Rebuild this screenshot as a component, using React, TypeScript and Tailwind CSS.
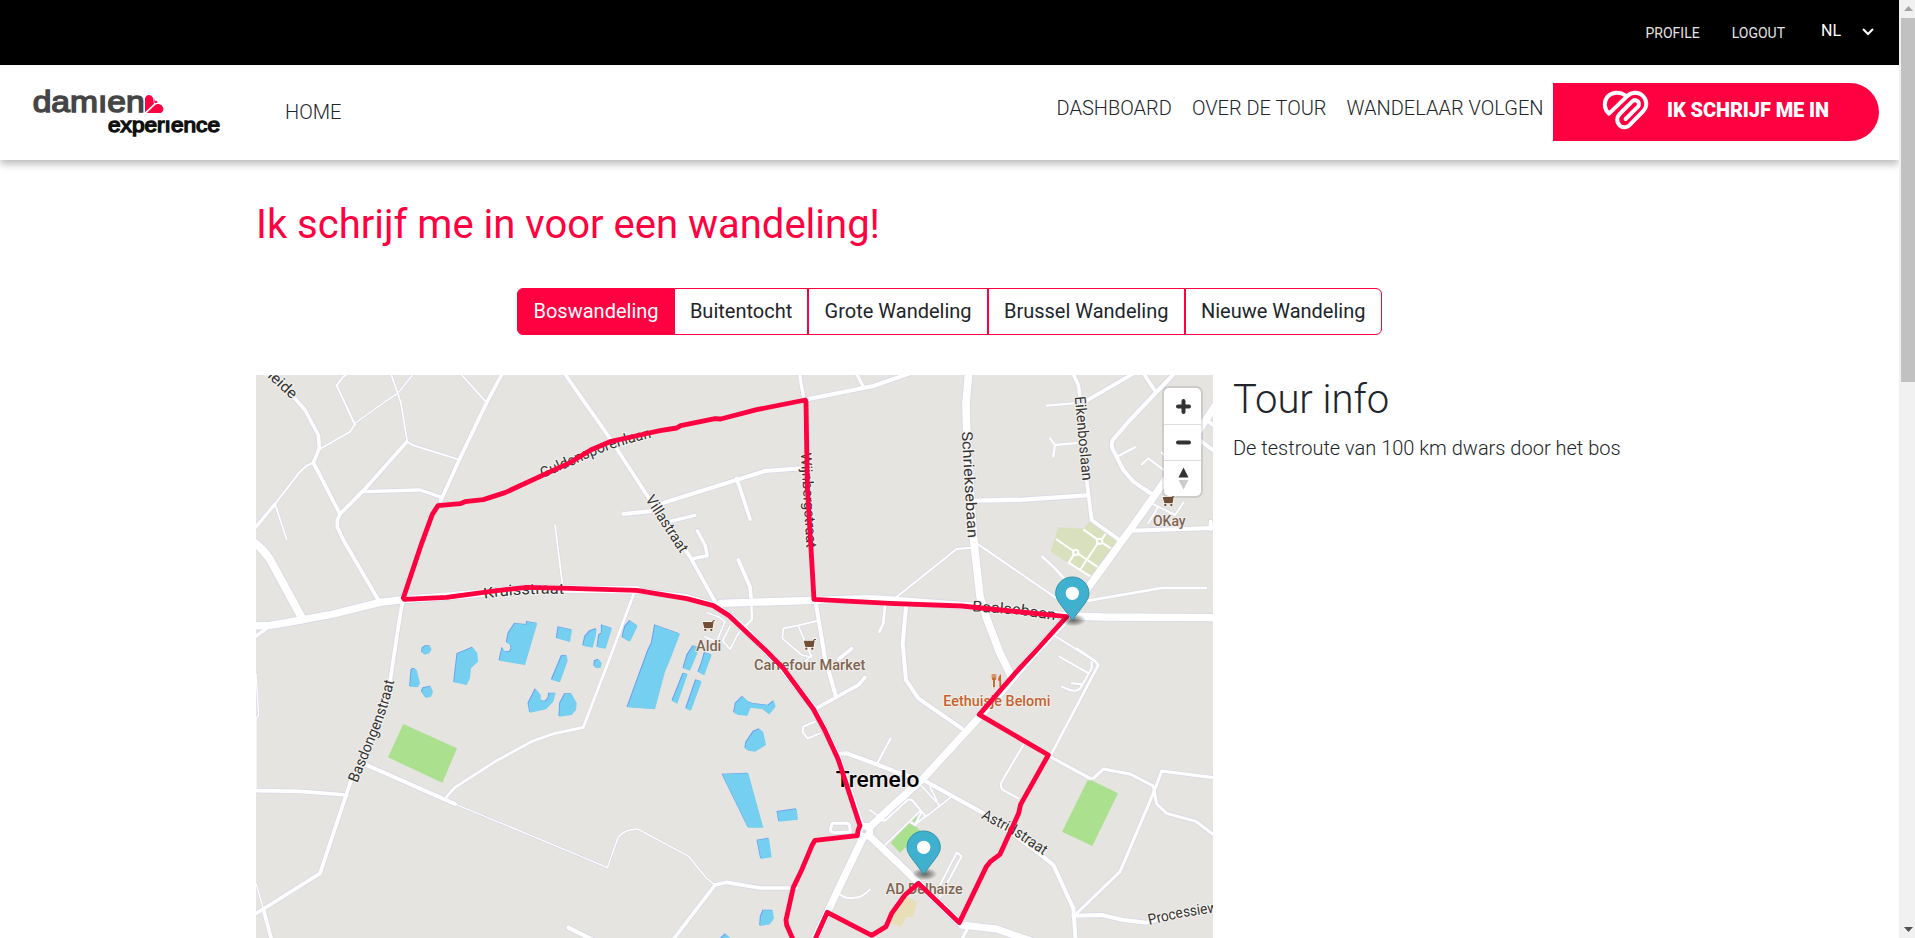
import React from "react";

const ROUTE = "#ff0040";

type Road = { w: number; d: string };

const roads: Road[] = [
  // footpaths and service roads
  { w: 4, d: "M315,160 L405,95 443,70 490,12" },
  { w: 5, d: "M423,12 L443,70 453,100 472,216" },
  { w: 6, d: "M292,12 L280,20 260,46 315,165" },
  { w: 5, d: "M315,163 L300,185 210,237" },
  { w: 6, d: "M75,402 L150,305 170,287 190,278" },
  { w: 5, d: "M75,402 L110,508" },
  { w: 6, d: "M472,216 L490,226 625,268" },
  { w: 5, d: "M635,15 L710,98" },
  { w: 5, d: "M915,465 L937,640" },
  { w: 4, d: "M615,1302 L990,1458 1072,1493 1105,1400 Q1130,1375 1165,1378 L1315,1458 1370,1525 1395,1545" },
  { w: 8, d: "M590,1280 L615,1252 735,1175 850,1112 915,1090 1000,1072 1085,850 1150,675" },
  { w: 4, d: "M18,1540 L40,1617" },
  { w: 4, d: "M18,910 L26,1035 16,1048" },
  { w: 4, d: "M18,1048 L18,1262" },
  { w: 7, d: "M1504,700 L1506,748 1480,775" },
  { w: 5, d: "M1372,728 L1405,740 1425,755 1400,815 1365,800 M1440,770 L1418,812 1440,838 1465,790 1500,755" },
  { w: 5, d: "M1705,752 L1645,766 1600,775 1597,805 1655,855 1685,862 1645,768 M1685,855 L1660,880" },
  { w: 6, d: "M1695,1055 L1660,1070 1658,1086 1673,1105 1710,1090" },
  { w: 6, d: "M1922,1105 L1882,1180" },
  { w: 6, d: "M1765,1570 Q1785,1588 1810,1583 Q1835,1585 1860,1558" },
  { w: 6, d: "M1890,1350 L1905,1352 1975,1288 1988,1292 2015,1325 1995,1365 1984,1358 M2028,1338 L1998,1362" },
  { w: 5, d: "M1905,1425 L2012,1322 M1905,1352 L1860,1320" },
  { w: 5, d: "M2012,1245 L2070,1308 M2040,1250 L2062,1295 M2105,1280 L2028,1340 1985,1290" },
  { w: 6, d: "M2065,1555 L2120,1448 2135,1458 2070,1580" },
  { w: 6, d: "M2320,1125 L2255,1235 Q2248,1252 2262,1262 L2305,1285" },
  { w: 6, d: "M2428,860 L2512,908 M2525,875 L2525,895 2495,948 Q2485,968 2460,960 L2435,950 M2465,940 L2495,943" },
  { w: 8, d: "M1905,705 L1900,760 1888,785" },
  { w: 6, d: "M1935,685 L2120,537 2165,533" },
  { w: 6, d: "M2180,520 L2420,685" },
  { w: 7, d: "M2390,107 L2470,100" },
  { w: 7, d: "M2400,205 L2415,225 2495,218 M2410,260 L2414,230" },
  { w: 7, d: "M2605,258 L2655,232" },
  { w: 7, d: "M2675,283 L2695,265 2745,303 M2735,248 L2790,300" },
  { w: 6, d: "M2705,400 L2775,435 2800,398 M2695,460 L2725,410" },
  { w: 8, d: "M2515,692 L2735,654 2868,654" },
  { w: 8, d: "M2377,560 L2410,590 2460,645" },
  { w: 6, d: "M2410,795 L2530,870" },
  { w: 8, d: "M2400,1160 L2545,885 2535,873 2480,836" },
  { w: 9, d: "M2475,1635 L2610,1505 2710,1270 2735,1203 2890,1223" },
  { w: 9, d: "M2400,1160 L2520,1225 2530,1225 2560,1197 2640,1212 2710,1248 2720,1302 2750,1330 2838,1354 2890,1394" },
  { w: 10, d: "M2150,1680 L2135,1710" },
  // residential streets
  { w: 11, d: "M40,0 L130,80 165,120 205,195 208,235 190,278 270,432 262,450 262,470 280,510 385,690" },
  { w: 11, d: "M470,216 L340,362 270,432" },
  { w: 10, d: "M340,365 L510,360 575,382" },
  { w: 11, d: "M757,10 L710,98 625,275 572,392" },
  { w: 10, d: "M12,478 L75,402" },
  { w: 10, d: "M12,803 L50,775" },
  { w: 11, d: "M458,690 L445,770 430,870 420,935 M300,1240 L210,1510 40,1617 12,1634" },
  { w: 11, d: "M420,935 L385,1060 300,1240" },
  { w: 11, d: "M22,1262 L150,1264 290,1275" },
  { w: 12, d: "M350,1185 L615,1302" },
  { w: 11, d: "M40,1617 L66,1715" },
  { w: 12, d: "M955,1673 L1050,1720" },
  { w: 11, d: "M1265,1715 L1395,1545 1430,1537 1530,1554 1640,1554" },
  { w: 11, d: "M943,8 L960,34 1080,205 1200,390 1320,560 1398,700" },
  { w: 12, d: "M1660,90 L1870,48 1945,22 2000,3" },
  { w: 10, d: "M1648,10 L1662,90 M1820,12 L1840,50" },
  { w: 12, d: "M1120,432 L1200,424 1235,400 1545,303 1655,295" },
  { w: 11, d: "M1460,325 L1500,447" },
  { w: 10, d: "M1245,458 L1335,436" },
  { w: 10, d: "M1342,482 L1365,525 1372,557 1325,567" },
  { w: 11, d: "M1465,570 L1500,650 1504,695" },
  { w: 12, d: "M1697,695 L1725,865 1758,980" },
  { w: 11, d: "M1845,922 L1825,945 1690,1020 M1805,836 L1765,868" },
  { w: 12, d: "M1765,1152 L1790,1150 1885,1185 1950,1210 2020,1230" },
  { w: 12, d: "M2020,1230 L2195,1327 2300,1400 2380,1460 2410,1485 2470,1615 2477,1715" },
  { w: 12, d: "M2470,1637 L2555,1635 2620,1650 2690,1658 2820,1625 2895,1605" },
  { w: 12, d: "M1968,712 L1958,820 1968,930 2005,985 2135,1075" },
  { w: 13, d: "M2170,392 L2320,389 2510,376" },
  { w: 11, d: "M2468,8 L2485,45 2490,80 2510,330 2525,450 2605,508" },
  { w: 11, d: "M2505,95 L2665,2" },
  { w: 12, d: "M2775,8 L2640,150 2590,208 Q2582,220 2587,235 L2620,300 2650,335 2705,372" },
  { w: 11, d: "M2680,10 L2715,62" },
  { w: 12, d: "M2640,482 L2890,474 M2882,478 L2882,455" },
  { w: 12, d: "M2850,212 L2892,242 M2865,148 L2892,166" },
  { w: 9, d: "M1745,1365 Q1745,1360 1752,1360 L1790,1360 Q1798,1360 1799,1370 L1801,1386 1755,1388 Q1741,1388 1741,1378 Z" },
  // main roads
  { w: 17, d: "M1398,710 Q1450,738 1500,792 L1600,900 1690,1012 1725,1080 1766,1165 1836,1370" },
  { w: 22, d: "M10,768 L60,766 110,758 250,732 390,697 460,689 600,678 840,656 1160,660" },
  { w: 15, d: "M1160,662 L1310,680 1400,708" },
  { w: 22, d: "M1412,700 L1690,691 1860,686 1920,690 2170,709 2440,737 2560,741 2895,743" },
  { w: 24, d: "M8,515 Q35,530 60,568 L158,748" },
  { w: 23, d: "M2156,10 L2148,100 2150,180 2170,500 2190,680 2210,745 2250,850 2285,920" },
  { w: 22, d: "M2895,108 L2775,290 2640,480 2520,645 2455,740 2355,848 2185,1045 2020,1225 1920,1315 1845,1385" },
  { w: 22, d: "M1845,1390 L1735,1620 1692,1712" },
  { w: 21, d: "M1845,1385 L1950,1485 2135,1665 2240,1677 2340,1712" },
];

const lakes = [
  "517,835 527,828 540,828 545,838 538,850 525,854 516,847",
  "795,760 829,764 831,755 862,760 825,885 748,872 757,832 765,845 778,846 784,838 782,825 770,818 775,790",
  "925,771 966,780 960,816 920,805",
  "622,852 668,832 682,850 684,875 663,895 660,925 650,945 612,937",
  "484,900 490,895 500,900 510,940 504,952 480,950",
  "515,965 520,954 542,949 549,965 543,980 528,984",
  "935,858 950,856 953,872 930,937 905,930",
  "857,957 872,975 872,990 885,995 895,985 897,970 917,970 910,995 888,1018 840,1028 835,1000",
  "945,972 965,972 980,1000 978,1020 965,1035 928,1040 930,1000",
  "1000,825 1005,800 1020,783 1040,776 1037,800 1028,833 1000,828",
  "1055,765 1086,775 1067,836 1042,832 1047,795 1055,790",
  "1117,803 1125,770 1140,752 1163,768 1140,815",
  "1215,765 1290,792 1260,870 1245,905 1215,1018 1132,1012 1195,840 1205,820",
  "1330,828 1345,832 1342,850 1320,902 1300,895 1312,855",
  "1364,848 1385,855 1363,916 1345,906 1355,880",
  "1300,910 1313,913 1282,1001 1267,993",
  "1338,930 1355,935 1323,1022 1308,1016",
  "1034,873 1046,868 1055,880 1052,893 1040,895 1033,888",
  "1452,1028 1457,1000 1478,979 1495,995 1510,1001 1555,1006 1572,993 1577,1010 1558,1033 1540,1018 1502,1013 1492,1037 1465,1035",
  "1486,1135 1488,1118 1510,1085 1528,1077 1540,1087 1548,1125 1515,1145 1495,1142",
  "1417,1213 1495,1210 1540,1373 1495,1373",
  "1582,1325 1640,1317 1644,1349 1587,1355",
  "1522,1411 1557,1405 1565,1462 1533,1467",
  "1540,1621 1568,1621 1572,1645 1560,1663 1530,1668 1532,1640",
  "1412,1706 1427,1692 1442,1706",
];

const routeLine =
  "M1632,1715 L1610,1665 1608,1650 1630,1552 1655,1500 1687,1424 1695,1411 1822,1397 1824,1382 1830,1367 1766,1172 1760,1158 1725,1082 1690,1017 1600,895 1548,842 1436,736 1390,707 1310,686 1160,661 960,655 830,652 740,662 590,682 463,688 460,684 515,520 547,433 564,407 630,401 645,395 700,389 765,368 960,278 1022,240 1080,215 1170,195 1230,182 1280,174 1292,167 1395,146 1412,147 1520,119 1666,90 1668,95 1672,350 1692,688 1920,700 2135,708 2450,740 2360,840 2300,905 2188,1034 2395,1155 2312,1303 2306,1330 2250,1453 2222,1474 2209,1490 2128,1658 2005,1540 1965,1575 1925,1630 1908,1670 1865,1696 1732,1627 1692,1715";

type RoadLabel = { id: string; text: string; d: string; len?: number };

const roadLabels: RoadLabel[] = [
  { id: "heide", text: "heide", d: "M40,10 L166,126", len: 116 },
  { id: "gulden", text: "Guldensporenlaan", d: "M878,325 L1000,271 Q1080,232 1206,203", len: 350 },
  { id: "villa", text: "Villastraat", d: "M1185,388 L1305,572", len: 195 },
  { id: "wijn", text: "Wijnbergstraat", d: "M1652,249 L1671,560", len: 286 },
  { id: "schriek", text: "Schrieksebaan", d: "M2135,185 L2154,520", len: 320 },
  { id: "eiken", text: "Eikenboslaan", d: "M2474,80 L2500,360", len: 254 },
  { id: "kruis", text: "Kruisstraat", d: "M703,686 Q810,668 960,672", len: 240 },
  { id: "baal", text: "Baalsebaan", d: "M2166,724 L2300,733 2440,754", len: 251 },
  { id: "basdongen", text: "Basdongenstraat", d: "M322,1240 L375,1110 Q416,1015 437,915", len: 327 },
  { id: "astrid", text: "Astridstraat", d: "M2192,1344 L2290,1395 2400,1470", len: 219 },
  { id: "processie", text: "Processieweg", d: "M2698,1665 L2800,1641 3000,1612", len: 255 },
];

function Cart({ x, y }: { x: number; y: number }) {
  return (
    <g transform={`translate(${x} ${y})`} fill="#734e36" stroke="#fff" strokeWidth={4} paintOrder="stroke">
      <path d="M-17,-11 H11 L14,-16 H20 V-13 H16 L13,8 H-12 Z" />
      <circle cx={-9} cy={13} r={3.5} />
      <circle cx={9} cy={13} r={3.5} />
    </g>
  );
}

function Marker({ x, y }: { x: number; y: number }) {
  return (
    <g transform={`translate(${x} ${y})`}>
      <ellipse cx={3} cy={0} rx={38} ry={19} fill="url(#pinShadow)" />
      <path
        d="M0,0 L-38,-50 C-46,-62 -50,-70 -50,-80 A50,49 0 0 1 50,-80 C50,-70 46,-62 38,-50 Z"
        fill="#3fb1ce"
        stroke="#3593ab"
        strokeWidth={3}
      />
      <circle cx={0} cy={-80} r={20} fill="#fff" />
    </g>
  );
}

function Place({ x, y, w, text, color = "#7d6453" }: { x: number; y: number; w: number; text: string; color?: string }) {
  return (
    <text
      x={x}
      y={y}
      textLength={w}
      lengthAdjust="spacingAndGlyphs"
      fontSize={43}
      fill={color}
      fontWeight={500}
      stroke="#f3f2ef"
      strokeWidth={5}
      paintOrder="stroke"
    >
      {text}
    </text>
  );
}

function TourMap() {
  return (
    <svg viewBox="18 15 2871 1689" className="block h-[563px] w-[957px]" fontFamily='Roboto, "Liberation Sans", sans-serif'>
      <defs>
        <radialGradient id="pinShadow">
          <stop offset="0" stopColor="#000" stopOpacity=".55" />
          <stop offset=".5" stopColor="#000" stopOpacity=".32" />
          <stop offset="1" stopColor="#000" stopOpacity="0" />
        </radialGradient>
        {roadLabels.map((l) => (
          <path key={l.id} id={l.id} d={l.d} />
        ))}
      </defs>
      <rect x={0} y={0} width={2900} height={1720} fill="#e5e4e0" />
      <g fill="#abe08f">
        <polygon points="460,1062 621,1135 577,1238 414,1162" />
        <polygon points="2515,1226 2604,1270 2527,1428 2436,1385" />
        <polygon points="1980,1355 2015,1385 1950,1448 1922,1418" />
        <polygon points="1985,1350 2004,1330 2010,1338 1994,1356" />
      </g>
      <polygon points="1970,1580 2002,1595 1990,1640 1968,1642 1955,1670 1915,1658 1935,1610" fill="#e8dfb9" />
      <polygon points="2425,472 2500,476 2526,448 2606,512 2520,620 2402,545" fill="#d9e0bd" />
      <g fill="none" stroke="#fff" strokeWidth={6}>
        <path d="M2418,507 L2470,543 M2484,551 L2545,592 M2500,478 L2542,508 M2556,518 L2590,540 M2543,520 L2490,600 M2472,554 L2456,578 2522,620 M2556,507 L2568,490" />
        <circle cx={2549} cy={514} r={8} />
        <circle cx={2477} cy={547} r={8} />
      </g>
      <g fill="#6a9df0" transform="translate(-2.5 -2)">
        {lakes.map((p) => (
          <polygon key={p} points={p} />
        ))}
      </g>
      <g fill="#75cff0">
        {lakes.map((p) => (
          <polygon key={p} points={p} />
        ))}
      </g>
      <g fill="none" stroke="#d8d9e6" strokeLinejoin="round" strokeLinecap="round">
        {roads.map((r) => (
          <path key={r.d} d={r.d} strokeWidth={r.w + (r.w > 8 ? 5 : 3.5)} />
        ))}
        <circle cx={1845} cy={1384} r={27} fill="#fff" strokeWidth={3} />
      </g>
      <g fill="none" stroke="#fff" strokeLinejoin="round" strokeLinecap="round">
        {roads.map((r) => (
          <path key={r.d} d={r.d} strokeWidth={r.w} />
        ))}
      </g>
      <circle cx={1844} cy={1384} r={25} fill="#fff" />
      <circle cx={1843} cy={1384} r={6} fill="#d9dadf" />
      <g fill="#333" fontSize={45} stroke="#f3f2ef" strokeWidth={6} paintOrder="stroke">
        {roadLabels.map((l) => (
          <text key={l.id} textLength={l.len} lengthAdjust="spacingAndGlyphs">
            <textPath href={`#${l.id}`} textLength={l.len} lengthAdjust="spacingAndGlyphs">
              {l.text}
            </textPath>
          </text>
        ))}
      </g>
      <Cart x={1375} y={767} />
      <Cart x={1678} y={823} />
      <Cart x={2755} y={392} />
      <Place x={1338} y={842} w={76} text="Aldi" />
      <Place x={1512} y={900} w={334} text="Carrefour Market" />
      <Place x={2709} y={468} w={98} text="OKay" />
      <Place x={1907} y={1571} w={231} text="AD Delhaize" />
      <Place x={2080} y={1008} w={321} text="Eethuisje Belomi" color="#c5622c" />
      <g fill="#c8692f" stroke="#f3f2ef" strokeWidth={3} paintOrder="stroke">
        <path d="M2225,912 V924 Q2225,930 2229,931 V952 H2235 V931 Q2239,930 2239,924 V912 H2236 V923 H2234 V912 H2230 V923 H2228 V912 Z" />
        <path d="M2253,912 Q2244,918 2244,932 H2248 V952 H2254 Z" />
      </g>
      <text
        x={1757}
        y={1250}
        textLength={251}
        lengthAdjust="spacingAndGlyphs"
        fontSize={68}
        fontWeight={500}
        fill="#000"
        stroke="#f3f2ef"
        strokeWidth={6}
        paintOrder="stroke"
      >
        Tremelo
      </text>
      <path d={routeLine} fill="none" stroke={ROUTE} strokeWidth={14.5} strokeLinejoin="round" />
      <Marker x={2467} y={750} />
      <Marker x={2021} y={1512} />
    </svg>
  );
}

function Logo() {
  return (
    <svg viewBox="25 0 570 180" className="h-[60px] w-[190px] overflow-visible" fontFamily='"Liberation Sans", sans-serif'>
      <text
        x={24}
        y={97}
        fontSize={86}
        textLength={336}
        lengthAdjust="spacingAndGlyphs"
        fill="#454545"
        stroke="#454545"
        strokeWidth={4}
      >
        damıen
      </text>
      <g fill={ROUTE}>
        <path d="M361,97 V58 C361,44 377,40 384,52 C388,59 385,64 388,71 Z" />
        <path d="M366,99 L392,74 C403,68 417,76 416,89 C415,96 410,99 403,99 Z" />
        <path d="M388,56 l4,7 4,-1 3,6 -9,1 Z" />
      </g>
      <text
        x={250}
        y={156}
        fontSize={60}
        textLength={336}
        lengthAdjust="spacingAndGlyphs"
        fill="#111"
        stroke="#111"
        strokeWidth={4}
      >
        experıence
      </text>
    </svg>
  );
}

function HeartIcon() {
  return (
    <svg viewBox="441 276 141 120" className="-mt-1 h-10 w-[47px]" fill="none" stroke="#fff" strokeWidth={12} strokeLinejoin="round" strokeLinecap="round">
      <path d="M511,292 C494,280 470,282 458,296 C446,310 446,332 462,347 L516,295 C530,281 552,281 564,294 C577,308 577,326 565,339 L528,377 C518,389 504,391 495,383 C484,373 484,358 494,348 L531,311 C542,300 559,313 549,326 L512,363" />
    </svg>
  );
}

function TopBar() {
  return (
    <div className="flex h-[65px] justify-end bg-black pr-[25px] text-sm text-[#e4e4e4]">
      <a className="mr-[32px] pt-[23px]">PROFILE</a>
      <a className="mr-[36px] pt-[23px]">LOGOUT</a>
      <a className="w-[41px] pt-[19px] text-base text-white">NL</a>
      <svg viewBox="0 0 12 8" className="mt-[28px] h-2 w-3" fill="none" stroke="#fff" strokeWidth={2}>
        <path d="M1,1 L6,6 L11,1" />
      </svg>
    </div>
  );
}

function NavBar() {
  return (
    <nav className="relative flex h-[95px] items-start bg-white pr-5 pl-[33px] text-xl leading-6 font-light text-[#212529] shadow-[0_4px_8px_rgba(0,0,0,0.28)]">
      <div className="mt-[15px] w-[252px]">
        <Logo />
      </div>
      <a className="mt-[35px]">HOME</a>
      <div className="ml-auto flex gap-5">
        <a className="mt-[31px]">DASHBOARD</a>
        <a className="mt-[31px]">OVER DE TOUR</a>
        <a className="mt-[31px] mr-[-10.5px]">WANDELAAR VOLGEN</a>
        <button className="mt-[18px] flex h-[58px] w-[326px] items-center rounded-r-[29px] bg-[#ff0040] pl-[49px] text-white">
          <HeartIcon />
          <span className="-mt-1 ml-[18px] text-xl font-black tracking-[-0.1px]">IK SCHRIJF ME IN</span>
        </button>
      </div>
    </nav>
  );
}

const tours = ["Boswandeling", "Buitentocht", "Grote Wandeling", "Brussel Wandeling", "Nieuwe Wandeling"];

function TourTabs() {
  return (
    <div className="flex justify-center">
      {tours.map((t, i) => (
        <button
          key={t}
          className={
            "h-[47px] border border-[#ff0040] px-[15.2px] pb-[2px] text-xl first:rounded-l-md last:rounded-r-md " +
            (i === 0 ? "bg-[#ff0040] text-white" : i === 1 ? "border-l-0 bg-white text-[#212529]" : "bg-white text-[#212529]")
          }
        >
          {t}
        </button>
      ))}
    </div>
  );
}

function MapControls() {
  return (
    <div className="absolute top-[13px] right-3 flex h-[108px] w-[37px] flex-col divide-y divide-[#dddddd] rounded-[5px] bg-white shadow-[0_0_0_2px_rgba(0,0,0,0.1)]">
      <button className="flex h-[37px] items-center justify-center pl-px">
        <svg viewBox="0 0 15 15" className="size-[15px]" stroke="#333" strokeWidth={4} strokeLinecap="round">
          <path d="M7.5,2 V13 M2,7.5 H13" />
        </svg>
      </button>
      <button className="flex h-9 items-center justify-center pl-px">
        <svg viewBox="0 0 15 15" className="size-[15px]" stroke="#333" strokeWidth={4} strokeLinecap="round">
          <path d="M2,7.5 H13" />
        </svg>
      </button>
      <button className="flex flex-1 items-center justify-center pl-px">
        <svg viewBox="0 0 11 23" className="h-[23px] w-[11px]">
          <path d="M0.5,10.5 L5.5,0.5 L10.5,10.5 Z" fill="#333" />
          <path d="M0.5,13 L5.5,22.5 L10.5,13 Z" fill="#ccc" />
        </svg>
      </button>
    </div>
  );
}

function Scrollbar() {
  return (
    <div className="flex h-full w-4 flex-col items-end bg-[#f1f1f1]">
      <svg viewBox="0 0 14 18" className="h-[18px] w-[14px]">
        <path d="M3,11 L7.5,6 L12,11 Z" fill="#a3a3a3" />
      </svg>
      <div className="h-[364px] w-[14px] bg-[#c1c1c1]" />
      <svg viewBox="0 0 14 18" className="mt-auto h-[18px] w-[14px]">
        <path d="M3,7 L7.5,12 L12,7 Z" fill="#505050" />
      </svg>
    </div>
  );
}

export default function App() {
  return (
    <div className="flex h-[938px] w-[1915px] overflow-hidden bg-white font-[Roboto,'Liberation_Sans',sans-serif] text-[#212529]">
      <div className="flex h-full w-[1899px] flex-col overflow-hidden">
        <TopBar />
        <NavBar />
        <main className="flex flex-col">
          <h1 className="mt-[41px] pl-[256px] text-[40px] leading-[48px] text-[#ff0040]">Ik schrijf me in voor een wandeling!</h1>
          <div className="mt-[39px]">
            <TourTabs />
          </div>
          <section className="mt-10 flex gap-5 pl-[256px]">
            <div className="relative h-[563px] w-[957px] overflow-hidden">
              <TourMap />
              <MapControls />
            </div>
            <div className="font-light">
              <h2 className="mt-px text-[40px] leading-[48px]">Tour info</h2>
              <p className="mt-[9px] text-xl leading-[30px]">De testroute van 100 km dwars door het bos</p>
            </div>
          </section>
        </main>
      </div>
      <Scrollbar />
    </div>
  );
}
